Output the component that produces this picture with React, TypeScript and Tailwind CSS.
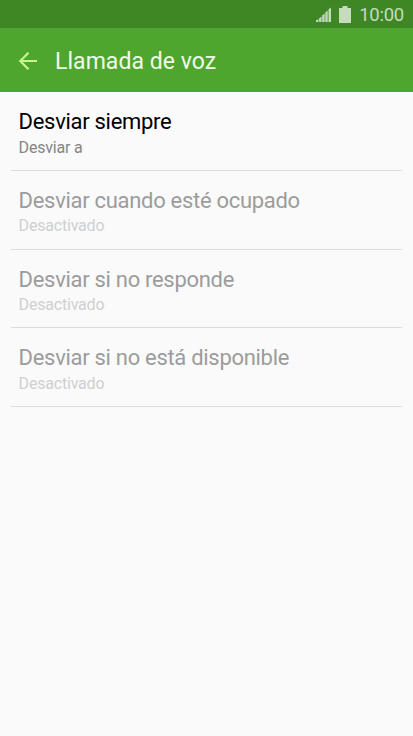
interface Option {
  title: string;
  status: string;
  enabled: boolean;
}

const options: Option[] = [
  { title: "Desviar siempre", status: "Desviar a", enabled: true },
  { title: "Desviar cuando esté ocupado", status: "Desactivado", enabled: false },
  { title: "Desviar si no responde", status: "Desactivado", enabled: false },
  { title: "Desviar si no está disponible", status: "Desactivado", enabled: false },
];

function StatusBar() {
  return (
    <div className="flex h-7 items-center justify-end bg-[#3f8624] pr-[9px] text-[#c5dcbc]">
      <svg className="mr-2 h-[15px] w-[15px]" viewBox="0 0 15 15" fill="currentColor">
        <path d="M0 13.500L2.400 12V15H0zM3.100 11.500L5.500 9.500V15H3.100zM6.200 8.500l2.400-2V15H6.200zM9.300 5.500l2.400-2V15H9.300zM12.500 2.500L15 .500V15h-2.500z" />
      </svg>
      <svg className="mr-2 h-[17px] w-3" viewBox="0 0 12 17" fill="currentColor">
        <path d="M3.500 0h5v2H12v15H0V2h3.500z" />
      </svg>
      <span className="pt-px text-[18.500px] leading-7 tracking-[-0.25px]">10:00</span>
    </div>
  );
}

function App() {
  return (
    <main className="flex h-[736px] w-[413px] flex-col bg-[#fafafa] font-[Roboto,sans-serif]">
      <StatusBar />
      <header className="flex h-16 items-center bg-[#4fa62f] pl-[19px] pt-0.5 text-[#f0fae8]">
        <button aria-label="Atrás">
          <svg className="h-[18px] w-[18px]" viewBox="0 0 18 18" fill="none" stroke="#c8f58c" strokeWidth="2.2">
            <path d="M9.500 .700L1.300 9l8.200 8.300M1.300 9H18" />
          </svg>
        </button>
        <h1 className="ml-[18px] pt-0.5 text-[23px] tracking-[0.05px]">Llamada de voz</h1>
      </header>
      <ul className="px-[11px]">
        {options.map((option) => (
          <li key={option.title} className="h-[78.75px] border-b border-[#dcdcdc] pl-[7.6px] pt-4">
            <p className={`text-[22px] leading-[27px] tracking-[-0.3px] ${option.enabled ? "text-black" : "text-[#9c9c9c]"}`}>
              {option.title}
            </p>
            <p className={`pt-[0.6px] text-[16px] leading-6 tracking-[-0.2px] ${option.enabled ? "text-[#868686]" : "text-[#d0d0d0]"}`}>
              {option.status}
            </p>
          </li>
        ))}
      </ul>
    </main>
  );
}

export default App;
